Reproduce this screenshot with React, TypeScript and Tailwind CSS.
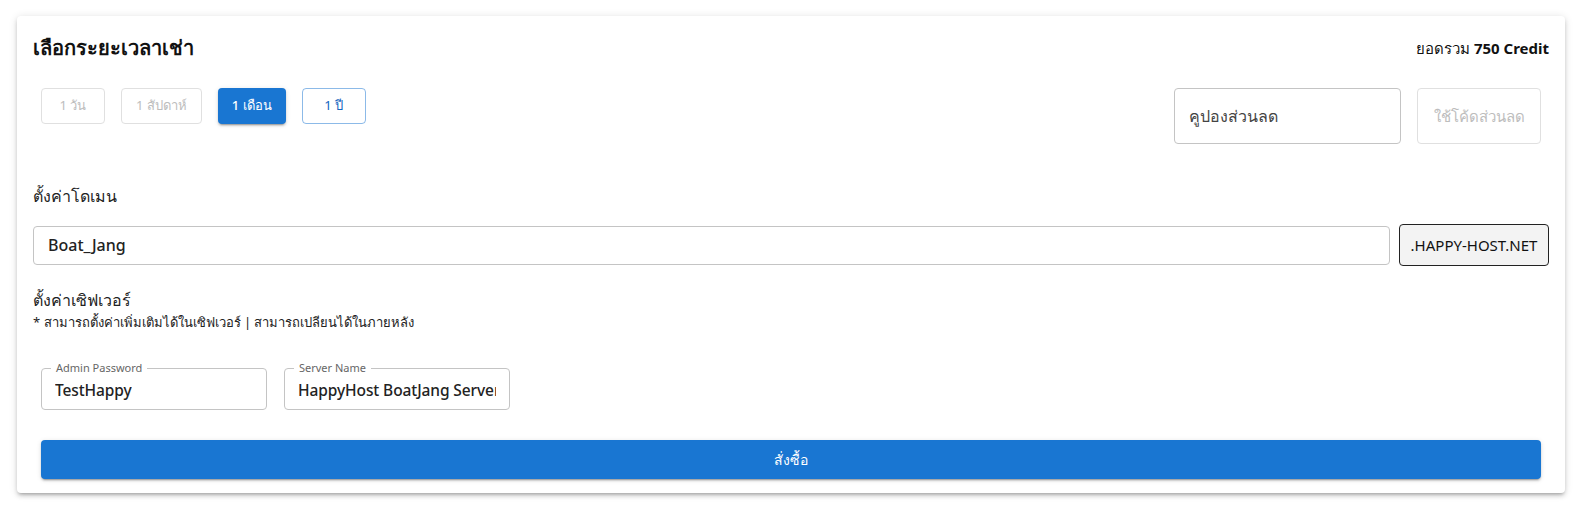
import React, { useState } from 'react';

const periods = [
  { label: '1 วัน', disabled: true },
  { label: '1 สัปดาห์', disabled: true },
  { label: '1 เดือน', disabled: false },
  { label: '1 ปี', disabled: false },
];

const OutlinedField = ({ label, value }: { label: string; value: string }) => (
  <div className="relative flex h-[42px] w-[226px] items-center rounded border border-[#c4c4c4] px-[13px]">
    <span className="absolute -top-[8px] left-[9px] bg-white px-[5px] text-[11px] leading-[14px] text-[#666]">{label}</span>
    <div className="mt-[2px] overflow-hidden whitespace-nowrap text-[15.5px] font-medium leading-[24px] tracking-[-0.1px] text-[#222]">{value}</div>
  </div>
);

const App: React.FC = () => {
  const [period, setPeriod] = useState('1 เดือน');

  return (
    <div className="min-h-[513px] bg-white pt-[16px] font-['Noto_Sans',sans-serif]">
      <div className="ml-[17px] w-[1548px] rounded bg-white px-[16px] pb-[14px] pt-[18px] shadow-[0_3px_3px_-2px_rgba(0,0,0,0.2),0_3px_4px_0_rgba(0,0,0,0.14),0_1px_8px_0_rgba(0,0,0,0.12)]">
        <div className="flex items-start justify-between">
          <h2 className="text-[20px] font-bold leading-[28px] text-[#111]">เลือกระยะเวลาเช่า</h2>
          <div className="pt-[2px] text-[15px] leading-[24px] text-[#111]">
            ยอดรวม <span className="font-bold">750 Credit</span>
          </div>
        </div>

        <div className="mt-[26px] flex items-start justify-between px-[8px]">
          <div className="flex gap-[16px]">
            {periods.map((p) => {
              const active = period === p.label;
              let cls = 'border border-[#1976d2]/50 text-[#1565c0]';
              if (p.disabled) cls = 'border border-[#e0e0e0] text-[#bdbdbd]';
              if (active) cls = 'bg-[#1976d2] text-white shadow-[0_3px_1px_-2px_rgba(0,0,0,0.2),0_2px_2px_0_rgba(0,0,0,0.14),0_1px_5px_0_rgba(0,0,0,0.12)]';
              return (
                <button
                  key={p.label}
                  disabled={p.disabled}
                  onClick={() => setPeriod(p.label)}
                  className={`h-[36px] min-w-[64px] rounded px-[14px] text-[13px] ${active ? 'font-medium' : ''} ${cls}`}
                >
                  {p.label}
                </button>
              );
            })}
          </div>
          <div className="flex gap-[16px]">
            <div className="flex h-[56px] w-[227px] items-center rounded border border-[#c4c4c4] px-[14px] text-[16px] text-[#444]">
              คูปองส่วนลด
            </div>
            <button disabled className="h-[56px] w-[124px] rounded border border-[#e0e0e0] text-[15px] text-[#bdbdbd]">
              ใช้โค้ดส่วนลด
            </button>
          </div>
        </div>

        <div className="mt-[40px] text-[16px] leading-[24px] text-[#222]">ตั้งค่าโดเมน</div>
        <div className="mt-[16px] flex items-center gap-[9px]">
          <div className="flex h-[39px] flex-1 items-center rounded border border-[#c4c4c4] px-[14px] text-[16px] font-medium text-[#222]">
            Boat_Jang
          </div>
          <div className="flex h-[42px] w-[150px] items-center justify-center rounded border border-[#222] bg-[#f3f3f3] text-[15px] text-[#111]">
            .HAPPY-HOST.NET
          </div>
        </div>

        <div className="mt-[22px] text-[16px] leading-[24px] text-[#222]">ตั้งค่าเซิฟเวอร์</div>
        <div className="text-[13px] leading-[20px] text-[#222]">* สามารถตั้งค่าเพิ่มเติมได้ในเซิฟเวอร์ | สามารถเปลียนได้ในภายหลัง</div>

        <div className="mt-[36px] flex gap-[17px] px-[8px]">
          <OutlinedField label="Admin Password" value="TestHappy" />
          <OutlinedField label="Server Name" value="HappyHost BoatJang Server" />
        </div>

        <div className="mt-[30px] px-[8px]">
          <button className="h-[39px] w-full rounded bg-[#1976d2] text-[14px] font-medium text-white shadow-[0_3px_1px_-2px_rgba(0,0,0,0.2),0_2px_2px_0_rgba(0,0,0,0.14),0_1px_5px_0_rgba(0,0,0,0.12)]">
            สั่งซื้อ
          </button>
        </div>
      </div>
    </div>
  );
};

export default App;
